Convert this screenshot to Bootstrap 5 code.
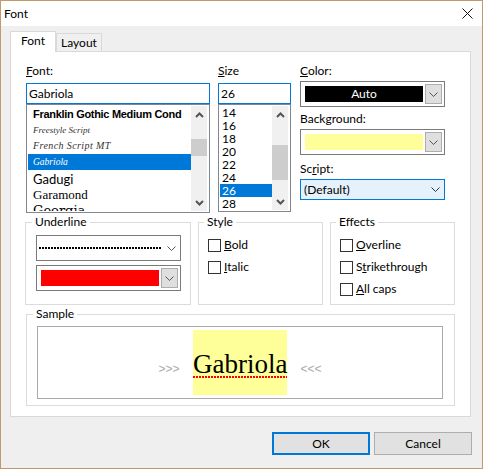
<!DOCTYPE html>
<html lang="en">
<head>
<meta charset="utf-8">
<title>Font</title>
<link href="https://cdn.jsdelivr.net/npm/bootstrap@5.3.0/dist/css/bootstrap.min.css" rel="stylesheet">
<style>
html,body{margin:0;background:#efefef}
body{font:12px/14px Lato,sans-serif;color:#000}
.dlg{width:483px;height:469px;border:1px solid #c09a6b;background:#efefef;overflow:hidden}
.ttl{height:25px;background:#fff;padding-left:3px}
.ttl svg{margin-right:9px}
.tabrow{margin:5px 0 0 9px;height:20px}
.tabx{height:18px;width:46px;margin-top:2px;background:#f0f0f0;border:1px solid #d9d9d9;border-bottom:0;text-align:center;line-height:17px}
.tabx.on{height:21px;margin-top:0;background:#fff;position:relative;z-index:1;line-height:17px}
.pane{width:461px;height:366px;margin-left:9px;background:#fff;border:1px solid #d9d9d9;padding:11px 0 0 15px}
.lbl{height:14px;margin:0 0 6px;display:block;line-height:16px}
.col1{width:184px;margin-right:8px}
.col2{width:73px;margin-right:9px}
.col3{width:145px}
.edit.form-control{height:21px;border:1px solid #0078d7;border-radius:0;padding:0 2px;font-size:12px;line-height:19px;color:#000;box-shadow:none}
.lst{height:109px;border:1px solid #82878f;padding:1px;background:#fff;overflow:hidden}
.lst2{height:108px}
.rows{overflow:hidden;flex:1 1 auto;min-width:0}
.rw{height:16px;padding-left:5px;white-space:nowrap;line-height:16px}
.rw.s{height:13px;line-height:14px;padding-left:2px}
.rw.sel{background:#0078d7;color:#fff}
.f1{font:bold 11px/16px "Liberation Sans",sans-serif;letter-spacing:-.3px}
.f2{font:italic 9px/16px "Liberation Serif",serif;color:#333}
.f3{font:italic 10px/16px "Liberation Serif",serif;letter-spacing:.4px;color:#333}
.f4{font:italic 9.5px/16px "Liberation Serif",serif}
.f5{height:18px;font-size:13px;line-height:18px}
.f6{height:13px;font:13px/13px "Liberation Serif",serif}
.f7{height:14px;font:13px/19px "DejaVu Serif",serif}
.sb{width:16px;flex:0 0 16px;margin-right:1px;background:#f0f0f0}
.sb svg{display:block;margin:6px auto 0}
.sb .dn{margin:auto auto 5px}
.thumb{background:#cdcdcd;width:16px}
.t1{height:17px;margin-top:21px}
.t2{height:35px;margin-top:27px}
.cbox{height:26px;border:1px solid #7a7a7a;background:#fff;padding:4px 2px 4px 4px}
.swat{flex:1 1 auto;height:16px;text-align:center;line-height:16px}
.kblack{background:#000;color:#fff}
.kyel{background:#ffff99}
.kred{background:#f00}
.arr{width:17px;height:20px;margin-left:2px;margin-top:-2px;background:#dfdfdf;border:1px solid #adadad;flex:0 0 17px}
.lb3{height:14px;margin:0 0 4px;display:block;line-height:16px}
.lb3.m{margin-top:4px}
.lb3.n{margin-top:6px}
.scr{height:21px;background:#e5f1fb;border:1px solid #0078d7;padding:0 4px 0 3px}
.row2{margin:2px 0 0 -1px}
fieldset.grp{border:1px solid #dcdcdc;height:90px;padding:0 9px 0 10px;min-width:0}
fieldset.grp legend{float:none;width:auto;font-size:12px;line-height:14px;padding:0 3px;margin:0 0 0 -4px}
.g1{width:166px;margin:0 7px 0 0}
fieldset.g2{width:125px;margin:0 7px 0 0;padding-left:9px}
fieldset.g3{width:125px;margin:0;padding-left:9px}
.cb1{height:26px;border:1px solid #7a7a7a;padding:0 4px 0 2px;margin-top:6px}
.cb2{height:26px;border:1px solid #7a7a7a;padding:4px 2px 4px 4px;margin-top:4px}
.dots{flex:1 1 auto;height:2px;margin-right:5px;background:repeating-linear-gradient(90deg,#000 0 2px,transparent 2px 3px)}
.chk{height:22px}
.chk1{margin-top:5px}
.chk .form-check-input{width:13px;height:13px;margin:0 3px 0 0;border:1px solid #333;border-radius:0;flex:0 0 13px;float:none}
fieldset.sam{width:429px;height:99px;margin:2px 0 0;padding:0 10px}
.view{width:406px;height:73px;border:1px solid #aaa;margin-top:5px;background:#fff;padding-top:3px;color:#a9a9a9}
.yel{width:94px;height:65px;background:#ffff99;margin:0 12px;color:#000;font:27px/30px "Liberation Serif",serif;padding-top:19px;white-space:nowrap}
.rdots{height:2px;margin-top:-3px;background:repeating-linear-gradient(90deg,#f00 0 2px,transparent 2px 3px)}
.arrows{width:24px;font-size:12px;padding-top:32px;white-space:nowrap;text-align:center;font-family:"Liberation Sans",sans-serif}
.foot{margin:15px 0 0 271px}
.btn.dbtn{width:98px;height:23px;border-radius:0;background:#e1e1e1;border:1px solid #adadad;font-size:12px;line-height:14px;padding:0;color:#000}
.btn.dbtn.def{border:2px solid #0078d7;margin-right:4px}
</style>
</head>
<body>
<div class="dlg">
  <div class="ttl d-flex align-items-center justify-content-between">
    <span>Font</span>
    <svg width="11" height="11" viewBox="0 0 11 11"><path d="M.5.5l10 10M10.5.5l-10 10" stroke="#111" fill="none"/></svg>
  </div>
  <div class="tabrow d-flex">
    <div class="tabx on">Font</div>
    <div class="tabx">Layout</div>
  </div>
  <div class="pane">
    <div class="d-flex">
      <div class="col1">
        <label class="lbl"><u>F</u>ont:</label>
        <input class="form-control edit" value="Gabriola">
        <div class="lst d-flex">
          <div class="rows">
            <div class="rw f1">Franklin Gothic Medium Cond</div>
            <div class="rw f2">Freestyle Script</div>
            <div class="rw f3">French Script MT</div>
            <div class="rw f4 sel">Gabriola</div>
            <div class="rw f5">Gadugi</div>
            <div class="rw f6">Garamond</div>
            <div class="rw f7">Georgia</div>
          </div>
          <div class="sb d-flex flex-column">
            <svg width="9" height="6" viewBox="0 0 9 6"><path d="M1 5l3.5-3.5L8 5" stroke="#555" stroke-width="2" fill="none"/></svg>
            <div class="thumb t1"></div>
            <svg class="dn" width="9" height="6" viewBox="0 0 9 6"><path d="M1 1l3.5 3.5L8 1" stroke="#555" stroke-width="2" fill="none"/></svg>
          </div>
        </div>
      </div>
      <div class="col2">
        <label class="lbl"><u>S</u>ize</label>
        <input class="form-control edit" value="26">
        <div class="lst lst2 d-flex">
          <div class="rows">
            <div class="rw s">14</div>
            <div class="rw s">16</div>
            <div class="rw s">18</div>
            <div class="rw s">20</div>
            <div class="rw s">22</div>
            <div class="rw s">24</div>
            <div class="rw s sel">26</div>
            <div class="rw s">28</div>
          </div>
          <div class="sb d-flex flex-column">
            <svg width="9" height="6" viewBox="0 0 9 6"><path d="M1 5l3.5-3.5L8 5" stroke="#555" stroke-width="2" fill="none"/></svg>
            <div class="thumb t2"></div>
            <svg class="dn" width="9" height="6" viewBox="0 0 9 6"><path d="M1 1l3.5 3.5L8 1" stroke="#555" stroke-width="2" fill="none"/></svg>
          </div>
        </div>
      </div>
      <div class="col3">
        <label class="lb3"><u>C</u>olor:</label>
        <div class="cbox d-flex">
          <div class="swat kblack">Auto</div>
          <div class="arr d-flex align-items-center justify-content-center"><svg width="9" height="5" viewBox="0 0 9 5"><path d="M.5.5l4 4 4-4" stroke="#555" fill="none"/></svg></div>
        </div>
        <label class="lb3 m">Back<u>g</u>round:</label>
        <div class="cbox d-flex">
          <div class="swat kyel"></div>
          <div class="arr d-flex align-items-center justify-content-center"><svg width="9" height="5" viewBox="0 0 9 5"><path d="M.5.5l4 4 4-4" stroke="#555" fill="none"/></svg></div>
        </div>
        <label class="lb3 n">Sc<u>r</u>ipt:</label>
        <div class="scr d-flex align-items-center justify-content-between">
          <span>(Default)</span>
          <svg width="9" height="5" viewBox="0 0 9 5"><path d="M.5.5l4 4 4-4" stroke="#333" fill="none"/></svg>
        </div>
      </div>
    </div>
    <div class="row2 d-flex">
      <fieldset class="grp g1">
        <legend>Underline</legend>
        <div class="cb1 d-flex align-items-center justify-content-between">
          <div class="dots"></div>
          <svg width="9" height="5" viewBox="0 0 9 5"><path d="M.5.5l4 4 4-4" stroke="#555" fill="none"/></svg>
        </div>
        <div class="cb2 d-flex">
          <div class="swat kred"></div>
          <div class="arr d-flex align-items-center justify-content-center"><svg width="9" height="5" viewBox="0 0 9 5"><path d="M.5.5l4 4 4-4" stroke="#555" fill="none"/></svg></div>
        </div>
      </fieldset>
      <fieldset class="grp g2">
        <legend>Style</legend>
        <div class="chk chk1 d-flex align-items-center"><input class="form-check-input" type="checkbox"><span><u>B</u>old</span></div>
        <div class="chk d-flex align-items-center"><input class="form-check-input" type="checkbox"><span><u>I</u>talic</span></div>
      </fieldset>
      <fieldset class="grp g3">
        <legend>Effects</legend>
        <div class="chk chk1 d-flex align-items-center"><input class="form-check-input" type="checkbox"><span><u>O</u>verline</span></div>
        <div class="chk d-flex align-items-center"><input class="form-check-input" type="checkbox"><span>S<u>t</u>rikethrough</span></div>
        <div class="chk d-flex align-items-center"><input class="form-check-input" type="checkbox"><span><u>A</u>ll caps</span></div>
      </fieldset>
    </div>
    <fieldset class="grp sam">
      <legend>Sample</legend>
      <div class="view d-flex justify-content-center">
        <div class="arrows">&gt;&gt;&gt;</div>
        <div class="yel">Gabriola<div class="rdots"></div></div>
        <div class="arrows">&lt;&lt;&lt;</div>
      </div>
    </fieldset>
  </div>
  <div class="foot d-flex">
    <button class="btn dbtn def" type="button">OK</button>
    <button class="btn dbtn" type="button">Cancel</button>
  </div>
</div>
<script src="https://cdn.jsdelivr.net/npm/bootstrap@5.3.0/dist/js/bootstrap.bundle.min.js"></script>
</body>
</html>
